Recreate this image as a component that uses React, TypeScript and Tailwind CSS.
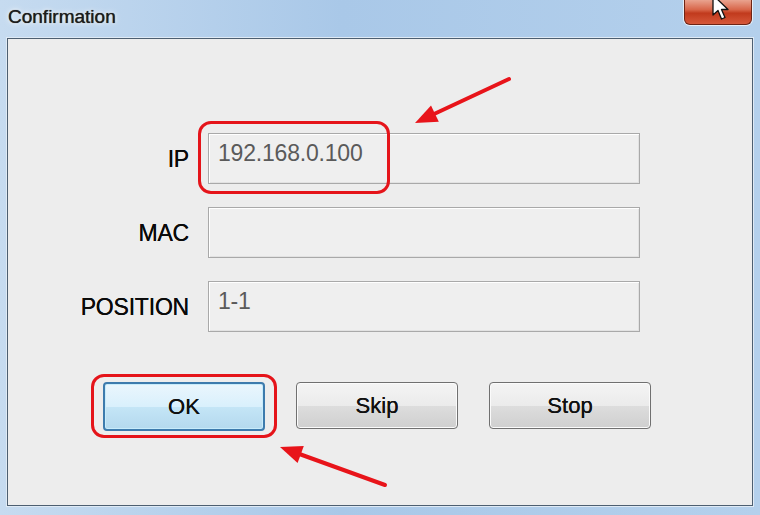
import React from "react";

const font = { fontFamily: '"Liberation Sans", Arial, sans-serif' };

function Field({ label, value }: { label: string; value?: string }) {
  return (
    <>
      <div className="flex items-center justify-end text-[23px] text-[#0a0a0a] leading-none pt-[1px] tracking-[-0.2px] [text-shadow:0_0_0.6px_#000]">{label}</div>
      <div className="h-[51px] border border-[#a9a9a9] bg-[#efefef] shadow-[inset_1px_1px_0_#ffffff,inset_-1px_-1px_0_#e2e2e2] flex items-start px-[9px] pt-[5px] text-[23px] text-[#5a5a5a] leading-[28px] tracking-[-0.2px]">
        {value}
      </div>
    </>
  );
}

function Btn({ label, primary }: { label: string; primary?: boolean }) {
  return (
    <div
      className={
        primary
          ? "w-[162px] h-[49px] rounded-[4px] border-2 border-[#3d7bad] bg-[linear-gradient(to_bottom,#eaf6fd_0%,#d9f0fc_50%,#c4e5f6_51%,#b4d9ee_100%)] shadow-[inset_0_0_0_1px_#c8ecfb] flex items-center justify-center text-[22px] text-[#111] [text-shadow:0_0_0.6px_#000]"
          : "w-[162px] h-[47px] rounded-[4px] border border-[#707070] bg-[linear-gradient(to_bottom,#f4f4f4_0%,#ebebeb_50%,#dddddd_51%,#cfcfcf_100%)] shadow-[inset_0_0_0_1px_#fbfbfb] flex items-center justify-center text-[22px] text-[#111] [text-shadow:0_0_0.6px_#000]"
      }
    >
      {label}
    </div>
  );
}

export default function App() {
  return (
    <div
      style={font}
      className="relative w-[760px] h-[515px] overflow-hidden flex flex-col bg-[linear-gradient(to_right,#c6dbf0,#a9c8e8_45%,#b4d0ec)]"
    >
      {/* title bar */}
      <div className="h-[38px] flex items-start justify-between pl-[8px] pr-[8px]">
        <div className="pt-[6px] text-[19px] text-[#1c1c1c] leading-[22px] [text-shadow:0_0_0.8px_#222,0_0_6px_#ffffff,0_0_3px_#ffffff]">
          Confirmation
        </div>
        <div className="relative w-[68px] h-[25px] rounded-b-[6px] border border-[#6e2415] border-t-0 shadow-[0_0_0_1px_#e7eef7] bg-[linear-gradient(to_bottom,#e9a38f_0%,#d8664a_40%,#c13a1d_55%,#d6583a_100%)]">
          <svg className="absolute left-[27px] top-[-6px]" width="18" height="28" viewBox="0 0 18 28">
            <path d="M1 1 L1 21 L6 16.5 L9.5 25 L13 23.5 L9.5 15.5 L16 15.5 Z" fill="#ffffff" stroke="#111" strokeWidth="1.3" strokeLinejoin="round" />
          </svg>
        </div>
      </div>

      {/* client area */}
      <div className="mx-[7px] mb-[9px] flex-1 border border-[#4d5f71] shadow-[0_0_0_1px_#dfeaf5] bg-[#ededed] flex flex-col">
        <div className="pt-[94px] pl-[62px] grid grid-cols-[119px_432px] gap-x-[19px] gap-y-[23px]">
          <Field label="IP" value="192.168.0.100" />
          <Field label="MAC" />
          <Field label="POSITION" value="1-1" />
        </div>
        <div className="pt-[50px] pl-[95px] flex gap-[31px] items-start">
          <Btn label="OK" primary />
          <Btn label="Skip" />
          <Btn label="Stop" />
        </div>
      </div>

      {/* annotations */}
      <div className="absolute left-[198px] top-[121px] w-[192px] h-[73px] rounded-[13px] border-[3px] border-[#e5141a]" />
      <div className="absolute left-[91px] top-[374px] w-[186px] h-[64px] rounded-[13px] border-[3px] border-[#e5141a]" />
      <svg className="absolute left-0 top-0 pointer-events-none" width="760" height="515" viewBox="0 0 760 515">
        <line x1="509" y1="79" x2="433" y2="114.5" stroke="#e8141a" strokeWidth="4" strokeLinecap="round" />
        <polygon points="415,123 438.8,121.7 431,105.5" fill="#e8141a" />
        <line x1="385" y1="485" x2="298" y2="453.5" stroke="#e8141a" strokeWidth="4" strokeLinecap="round" />
        <polygon points="280,447 303.8,446 297.6,463" fill="#e8141a" />
      </svg>
    </div>
  );
}
